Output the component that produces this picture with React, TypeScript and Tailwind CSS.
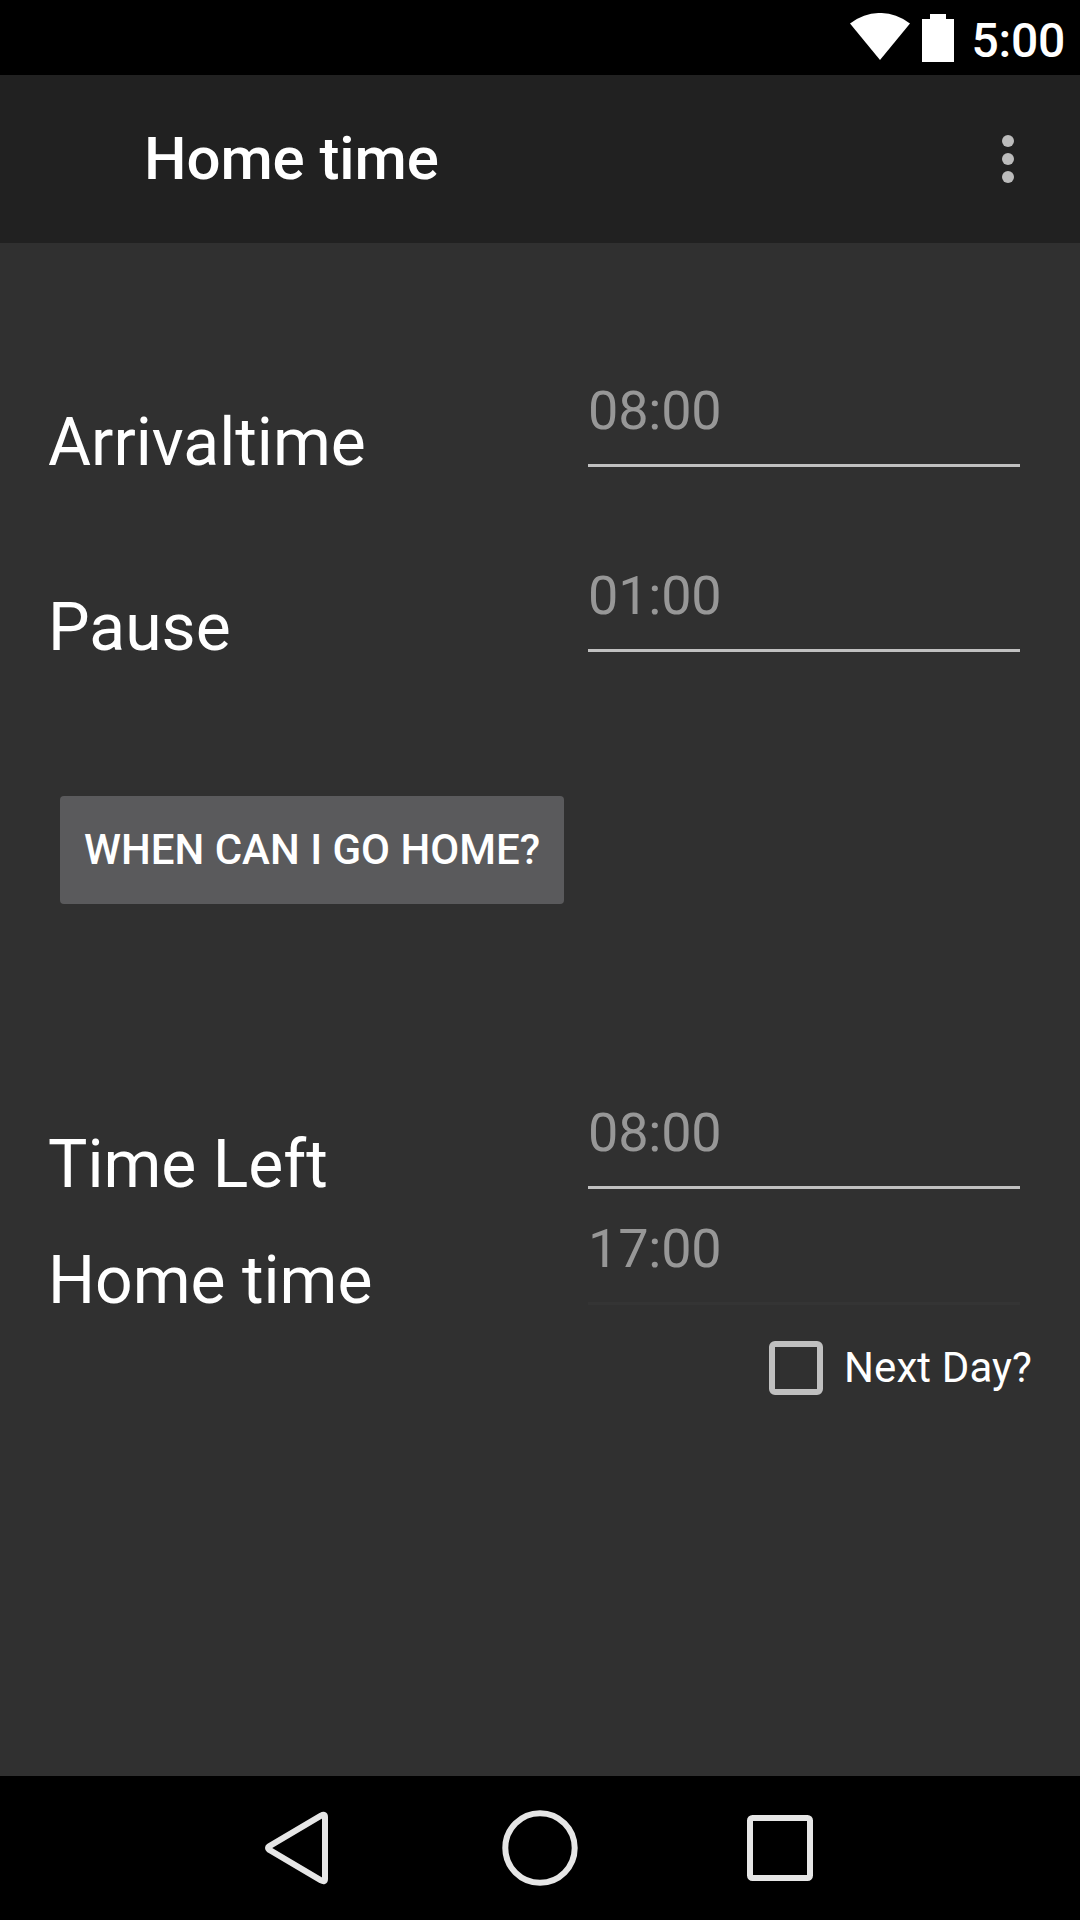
import React from "react";

function Field({ label, value, faint = false }: { label: string; value: string; faint?: boolean }) {
  return (
    <div className="flex h-[116px] pl-[48px] pr-[60px]">
      <div className="w-[540px] pt-[27px] text-[66px] leading-[77px] text-white">{label}</div>
      <div className="w-[432px]">
        <div className="h-[87px] pt-[2px] text-[54px] leading-[63px] tracking-[-0.2px] text-[#979797]">{value}</div>
        <div className={faint ? "h-[3px] bg-[#343434]" : "h-[3px] bg-[#c0c0c0]"} />
      </div>
    </div>
  );
}

export default function App() {
  return (
    <div className="flex h-[1920px] w-[1080px] flex-col overflow-hidden bg-[#303030] font-['Roboto',sans-serif]">
      <header className="flex h-[75px] shrink-0 items-start justify-end bg-black pr-[15px] text-white">
        <svg width="60" height="47" viewBox="0 0 60 47" className="mr-[12px] mt-[13px]"><path d="M0 10.5A48 48 0 0 1 60 10.5L30 47Z" fill="white" /></svg>
        <svg width="32" height="48" viewBox="0 0 32 48" className="mr-[18px] mt-[14px]"><path d="M8 0h16v5h8v43H0V5h8z" fill="white" /></svg>
        <span className="mt-[12px] text-[48px] font-medium leading-[57px] tracking-[-0.25px]">5:00</span>
      </header>
      <div className="flex h-[168px] shrink-0 items-center justify-between bg-[#212121] pl-[144px] pr-[66px] text-white">
        <h1 className="pb-px text-[60px] font-medium leading-[71px] tracking-[-0.1px]">Home time</h1>
        <svg width="12" height="48" viewBox="0 0 12 48" fill="#bcbcbc"><circle cx="6" cy="6" r="6" /><circle cx="6" cy="24" r="6" /><circle cx="6" cy="42" r="6" /></svg>
      </div>
      <main className="flex flex-1 flex-col pt-[134px]">
        <Field label="Arrivaltime" value="08:00" />
        <div className="h-[69px]" />
        <Field label="Pause" value="01:00" />
        <button className="ml-[60px] mt-[118px] h-[108px] w-[504px] rounded-[4px] bg-[#5a5a5c] pb-[2px] text-[42px] font-medium text-white">WHEN CAN I GO HOME?</button>
        <div className="h-[195px]" />
        <Field label="Time Left" value="08:00" />
        <Field label="Home time" value="17:00" faint />
        <label className="mt-[7px] flex h-[60px] items-center pl-[769px] text-[42px] leading-[49px] tracking-[0.1px] text-white">
          <span className="mr-[21px] h-[54px] w-[54px] rounded-[6px] border-[6px] border-[#c0c0c0]" />
          <span className="pb-px">Next Day?</span>
        </label>
      </main>
      <nav className="flex h-[144px] shrink-0 bg-black">
        <svg width="1080" height="144" fill="none" stroke="#e6e6e6" strokeWidth="6" strokeLinejoin="round"><path d="M269 70.3L321 39.6Q325 37.5 325 41V103Q325 106.5 321 104.4L269 73.7Q267 72 269 70.3Z" /><circle cx="540" cy="72" r="34.7" /><rect x="750" y="42" width="60" height="60" rx="2.5" /></svg>
      </nav>
    </div>
  );
}
